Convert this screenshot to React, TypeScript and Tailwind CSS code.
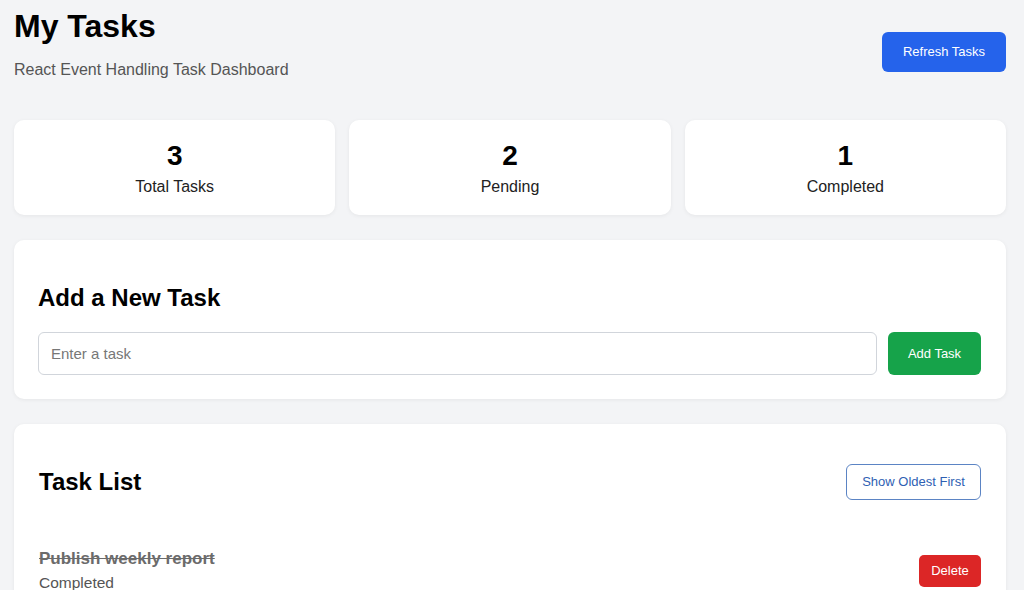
export default function App() {
  const stats = [
    { n: 3, label: "Total Tasks" },
    { n: 2, label: "Pending" },
    { n: 1, label: "Completed" },
  ];
  return (
    <div
      className="min-h-[590px] bg-[#f3f4f6] pl-[14px] pr-[18px] pt-[6px] pb-10 text-black"
      style={{ fontFamily: '"Liberation Sans", Arial, sans-serif' }}
    >
      <div className="flex items-start justify-between">
        <div>
          <h1 className="text-[32px] font-bold leading-[40px]">My Tasks</h1>
          <p className="mt-[12px] text-[16px] leading-6 text-[#555]">
            React Event Handling Task Dashboard
          </p>
        </div>
        <button className="mt-[26px] h-[40px] w-[124px] rounded-[6px] bg-[#2563eb] text-[13px] text-white">
          Refresh Tasks
        </button>
      </div>

      <div className="mt-[38px] grid grid-cols-3 gap-[14px]">
        {stats.map((s) => (
          <div
            key={s.label}
            className="flex flex-col items-center rounded-[10px] bg-white pt-[19px] pb-[16px] shadow-[0_1px_4px_rgba(0,0,0,0.06)]"
          >
            <div className="text-[28px] font-bold leading-[34px]">{s.n}</div>
            <div className="mt-[2px] text-[16px] leading-6 text-[#222]">{s.label}</div>
          </div>
        ))}
      </div>

      <div className="mt-[25px] rounded-[10px] bg-white px-[24px] pt-[42px] pb-[24px] shadow-[0_1px_4px_rgba(0,0,0,0.06)]">
        <h2 className="text-[24px] font-bold leading-[32px]">Add a New Task</h2>
        <div className="mt-[18px] flex gap-[11px] pr-[1px]">
          <input
            className="h-[43px] flex-1 rounded-[6px] border border-[#d1d5db] px-[12px] text-[15px] placeholder:text-[#777] outline-none"
            placeholder="Enter a task"
          />
          <button className="h-[43px] w-[93px] rounded-[6px] bg-[#16a34a] text-[13px] text-white">
            Add Task
          </button>
        </div>
      </div>

      <div className="mt-[25px] rounded-[10px] bg-white px-[24px] pt-[40px] pb-[24px] shadow-[0_1px_4px_rgba(0,0,0,0.06)]">
        <div className="flex items-center justify-between pr-[1px]">
          <h2 className="ml-[1px] text-[24px] font-bold leading-[32px]">Task List</h2>
          <button className="h-[36px] w-[135px] rounded-[6px] border border-[#5b84c4] bg-white text-[13px] text-[#2f5fb3]">
            Show Oldest First
          </button>
        </div>
        <div className="mt-[47px] flex items-center justify-between pr-[1px]">
          <div className="ml-[1px]">
            <div className="text-[17px] font-bold leading-6 text-[#6b6b6b] line-through">
              Publish weekly report
            </div>
            <div className="text-[15.5px] leading-6 text-[#555]">Completed</div>
          </div>
          <button className="h-[32px] w-[62px] rounded-[5px] bg-[#dc2626] text-[13px] text-white">
            Delete
          </button>
        </div>
      </div>
    </div>
  );
}
